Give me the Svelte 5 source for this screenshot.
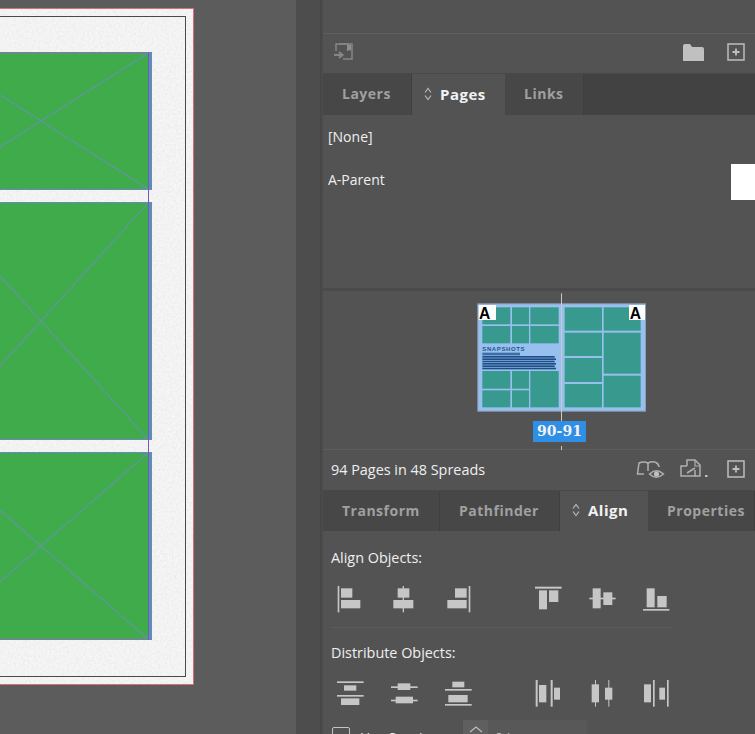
<script>
  const alignIcons = [
    { ox: 27, r: [[38,33,5,79],[48,40,34,28],[48,75,58,25]] },
    { ox: 189, r: [[233,33,4,79],[218,40,35,28],[205,75,60,25]] },
    { ox: 351, r: [[431,33,5,79],[390,40,35,28],[367,75,58,25]] },
    { ox: 627, gap: true, r: [[630,35,80,6],[642,46,24,57],[672,46,28,35]] },
    { ox: 789, r: [[793,68,79,5],[803,40,24,60],[835,52,27,38]] },
    { ox: 951, r: [[954,102,79,5],[965,40,24,57],[997,63,28,34]] }
  ];

  const distributeIcons = [
    { ox: 27, r: [[36,319,80,5],[57,331,37,16],[36,360,80,5],[48,370,55,20]] },
    { ox: 189, r: [[198,334,80,5],[218,325,38,20],[198,374,80,5],[212,365,52,20]] },
    { ox: 351, r: [[382,320,36,17],[360,342,80,5],[370,360,58,22],[360,387,80,5]] },
    { ox: 627, gap: true, r: [[632,315,6,80],[642,330,22,52],[677,315,6,80],[687,338,18,36]] },
    { ox: 789, r: [[810,315,3,80],[800,328,22,54],[850,315,3,80],[840,338,22,36]] },
    { ox: 951, r: [[957,328,21,54],[984,315,5,80],[1003,338,17,36],[1026,315,5,80]] }
  ];

  const frames = [138, 238, 188];

  // spread thumbnail cells, [x, y, w, h]
  const cells = [
    [37,52,84,51],[126,52,51,51],[181,52,85,51],
    [37,108,84,52],[126,108,51,52],[181,108,85,52],
    [37,243,84,53],[126,243,51,53],[181,243,85,109],
    [37,301,84,51],[126,301,51,51],
    [284,52,112,70],[284,128,112,70],[284,204,112,72],[284,282,112,70],
    [401,52,111,70],[401,128,111,123],[401,257,111,95]
  ];
  const bars = [198, 205, 212, 219, 226, 233];
</script>

{#snippet updown()}
  <svg class="updown" width="8" height="14" viewBox="0 0 8 14" aria-hidden="true">
    <path d="M1 5.500l3-4 3 4M1 8.500l3 4 3-4" />
  </svg>
{/snippet}

{#snippet plus()}
  <svg class="ic plus" width="18" height="18" viewBox="0 0 18 18" aria-hidden="true">
    <rect x="1" y="1" width="16" height="16" />
    <path d="M9 5.500v7M5.500 9h7" stroke-width="1.800" />
  </svg>
{/snippet}

<div class="app">
  <div class="canvas">
    <div class="page">
      <svg class="grain" aria-hidden="true">
        <filter id="paper">
          <feTurbulence type="fractalNoise" baseFrequency="0.45" numOctaves="3" />
          <feColorMatrix values="0 0 0 0 0.45  0 0 0 0 0.45  0 0 0 0 0.45  0 0 0 0.6 -0.2" />
        </filter>
        <rect width="100%" height="100%" filter="url(#paper)" />
      </svg>
      <div class="margins">
        <div class="frames">
          {#each frames as h}
            <div class="frame" style="height: {h}px">
              <svg viewBox="0 0 100 100" preserveAspectRatio="none" aria-hidden="true">
                <path d="M0 0L100 100M100 0L0 100" />
              </svg>
            </div>
          {/each}
        </div>
      </div>
    </div>
  </div>

  <div class="gutter"></div>

  <div class="panel">
    <div class="top-empty"></div>
    <div class="toolbar">
      <svg class="ic place" width="22" height="20" viewBox="0 0 22 20" aria-hidden="true">
        <path d="M3 9V2h16v15h-9" />
        <path d="M6 2h9v7" stroke-width="1.400" />
        <path d="M14 3h4v6l-2-1.500-2 1.500z" class="solid" />
        <path d="M1 13h8M6 10l3.500 3L6 16" stroke-width="2" />
      </svg>
      <span class="spacer"></span>
      <svg class="ic folder" width="21" height="17" viewBox="0 0 21 17" aria-hidden="true">
        <path class="solid" d="M0 2q0-2 2-2h5l2 3h10q2 0 2 2v12H0z" />
      </svg>
      {@render plus()}
    </div>

    <div class="tabs first">
      <div class="tab" style="width: 89px">Layers</div>
      <div class="tab active" style="width: 93px">{@render updown()}Pages</div>
      <div class="tab" style="width: 79px">Links</div>
    </div>

    <div class="parents">
      <div class="parent">[None]</div>
      <div class="parent">A-Parent<span class="swatch"></span></div>
    </div>

    <div class="thumbs">
      <svg class="spread" width="185" height="150" viewBox="0 3 555 450" aria-hidden="false">
        <rect x="23.500" y="41.500" width="503" height="322" fill="#97c0ee" stroke="#8b9db3" stroke-width="3" />
        {#each cells as c}
          <rect x={c[0]} y={c[1]} width={c[2]} height={c[3]} fill="#38998f" />
        {/each}
        <text x="37" y="184" class="snap">SNAPSHOTS</text>
        <rect x="37" y="188" width="113" height="8" fill="#3b6ea5" />
        {#each bars as y, i}
          <rect x="37" {y} width={i % 2 ? 221 : 217} height="5" fill="#1f4e86" />
        {/each}
        <rect x="26" y="45" width="52" height="45" fill="#fff" />
        <rect x="477" y="45" width="48" height="45" fill="#fff" />
        <text x="27" y="86" class="badge">A</text>
        <text x="479" y="86" class="badge">A</text>
        <rect x="273" y="10" width="3" height="383" fill="#c9c9c9" />
      </svg>
      <div class="spread-label">90-91</div>
      <div class="tick"></div>
    </div>

    <div class="footer">
      <span>94 Pages in 48 Spreads</span>
      <span class="spacer"></span>
      <svg class="ic eye" width="29" height="21" viewBox="0 0 29 21" aria-hidden="true">
        <path d="M8 15H1.500L3 4q4.500-2 9 0q4.500-2 8-.5q2.500 1 3 4.500" />
        <path d="M12 4v8" />
        <path d="M13.500 15q6.500-6.500 14 0q-7.500 6.500-14 0z" stroke-width="1.500" />
        <circle class="solid" cx="20.500" cy="15" r="2.600" />
      </svg>
      <svg class="ic dup" width="29" height="21" viewBox="0 0 29 21" aria-hidden="true">
        <path d="M7 7H1v10h14v-6" />
        <path d="M7 7V1h8l5 5v11h-5" />
        <path d="M15 1v6h5" stroke-width="1.200" />
        <path d="M7 14l8-5" />
        <rect class="solid" x="25" y="16" width="2.500" height="2" />
      </svg>
      {@render plus()}
    </div>

    <div class="tabs second">
      <div class="tab" style="width: 117px">Transform</div>
      <div class="tab" style="width: 120px">Pathfinder</div>
      <div class="tab active" style="width: 88px">{@render updown()}Align</div>
      <div class="tab" style="width: 107px">Properties</div>
    </div>

    <div class="align">
      <div class="label">Align Objects:</div>
      <div class="icon-row">
        {#each alignIcons as icon}
          <svg class:gap={icon.gap} width="30" height="30" viewBox="{icon.ox} 30 90 90" aria-hidden="true">
            {#each icon.r as r}
              <rect x={r[0]} y={r[1]} width={r[2]} height={r[3]} />
            {/each}
          </svg>
        {/each}
      </div>
      <div class="divider"></div>
      <div class="label dist">Distribute Objects:</div>
      <div class="icon-row">
        {#each distributeIcons as icon}
          <svg class:gap={icon.gap} width="30" height="30" viewBox="{icon.ox} 312 90 90" aria-hidden="true">
            {#each icon.r as r}
              <rect x={r[0]} y={r[1]} width={r[2]} height={r[3]} />
            {/each}
          </svg>
        {/each}
      </div>
      <div class="spacing">
        <span class="check"></span>
        <span class="use">Use Spacing</span>
        <span class="stepper"><span class="step"><svg width="16" height="7" viewBox="0 0 16 7" aria-hidden="true"><path d="M2 6l6-5 6 5" /></svg></span><span class="val">0 in</span></span>
      </div>
    </div>
  </div>
</div>

<style>
  :global(body) {
    margin: 0;
    background: #5c5c5c;
  }

  .app {
    display: flex;
    width: 755px;
    height: 734px;
    overflow: hidden;
    font-family: "Open Sans", "Noto Sans", sans-serif;
    color: #efefef;
  }

  /* document canvas */
  .canvas {
    position: relative;
    width: 296px;
    flex: none;
    background: #5c5c5c;
    overflow: hidden;
  }

  .page {
    position: absolute;
    left: -100px;
    top: 8px;
    width: 294px;
    height: 677px;
    box-sizing: border-box;
    padding: 7px;
    background: #f6f6f6;
    border: 1px solid #dc6b80;
  }

  .grain {
    position: absolute;
    inset: 0;
    width: 100%;
    height: 100%;
    opacity: 0.5;
  }

  .margins {
    position: relative;
    height: 661px;
    box-sizing: border-box;
    padding: 35px 33px 0 25px;
    border: 1px solid #4a4a4a;
  }

  .frames {
    position: relative;
    display: flex;
    flex-direction: column;
    gap: 12px;
  }

  .frames::after {
    content: "";
    position: absolute;
    top: 0;
    bottom: 0;
    right: 3px;
    width: 1px;
    background: #7a55c8;
  }

  .frame {
    box-sizing: border-box;
    background: #3fab4a;
    border-top: 1px solid #6b86c4;
    border-bottom: 1px solid #6b86c4;
    border-right: 4px solid #5b90b0;
  }

  .frame:first-child {
    border-top-color: #a45fd6;
  }

  .frame:last-child {
    border-bottom-color: #8d6fb8;
  }

  .frame svg {
    display: block;
    width: 100%;
    height: 100%;
  }

  .frame path {
    fill: none;
    stroke: #5a9a92;
    stroke-width: 1.500;
    vector-effect: non-scaling-stroke;
  }

  .gutter {
    width: 24px;
    flex: none;
    background: #4d4d4d;
    border-right: 1px solid #454545;
    box-sizing: content-box;
    margin-right: 2px;
    box-shadow: 3px 0 0 #4a4a4a;
  }

  /* right dock */
  .panel {
    flex: 1;
    display: flex;
    flex-direction: column;
    min-width: 0;
    background: #535353;
    font-size: 14px;
  }

  .top-empty {
    height: 33px;
    flex: none;
    border-bottom: 1px solid #5f5f5f;
  }

  .toolbar {
    height: 36px;
    flex: none;
    display: flex;
    align-items: center;
    padding: 0 10px;
    box-sizing: border-box;
  }

  .spacer {
    flex: 1;
  }

  .ic {
    display: block;
    flex: none;
    fill: none;
    stroke: #b0b0b0;
    stroke-width: 1.500;
  }

  .ic .solid {
    fill: #c0c0c0;
    stroke: none;
  }

  .place {
    opacity: 0.55;
  }

  .plus {
    margin-left: 23px;
    stroke: #bdbdbd;
  }

  .tabs {
    flex: none;
    display: flex;
    height: 41px;
    background: #424242;
    box-shadow: 0 -1px 0 #484848;
  }

  .tabs.first {
    margin-top: 4px;
  }

  .tabs.second {
    height: 40px;
    margin-top: 3px;
  }

  .tab {
    display: flex;
    align-items: center;
    flex: none;
    padding: 0 0 2px 19px;
    background: #474747;
    border-right: 1px solid #3f3f3f;
    box-sizing: border-box;
    color: #a0a0a0;
    font-weight: 700;
    font-size: 14px;
    letter-spacing: 0.500px;
    white-space: nowrap;
  }

  .tab.active {
    padding-left: 12px;
    background: #535353;
    color: #f2f2f2;
    border-right: none;
    font-size: 15px;
  }

  .updown {
    display: block;
    flex: none;
    margin-right: 8px;
    fill: none;
    stroke: #b8b8b8;
    stroke-width: 1.200;
  }

  .parents {
    height: 176px;
    flex: none;
    box-sizing: border-box;
    border-bottom: 3px solid #4a4a4a;
  }

  .parent {
    display: flex;
    align-items: center;
    justify-content: space-between;
    height: 43px;
    padding-left: 5px;
  }

  .swatch {
    width: 24px;
    height: 36px;
    background: #fff;
    margin-top: 5px;
  }

  .thumbs {
    position: relative;
    height: 159px;
    flex: none;
    box-sizing: border-box;
    padding: 0 0 0 147px;
    border-bottom: 1px solid #5c5c5c;
  }

  .spread {
    display: block;
  }

  .snap {
    font-family: "Liberation Sans", sans-serif;
    font-size: 18px;
    font-weight: 700;
    letter-spacing: 1.800px;
    fill: #24548c;
  }

  .badge {
    font-family: "Liberation Sans", sans-serif;
    font-size: 47px;
    font-weight: 700;
    fill: #000;
  }

  .spread-label {
    position: absolute;
    left: 210px;
    top: 130px;
    width: 53px;
    height: 21px;
    background: #2f8ee6;
    color: #f2f2f2;
    font-family: "DejaVu Serif", serif;
    font-size: 14px;
    font-weight: 700;
    line-height: 21px;
    text-align: center;
  }

  .tick {
    position: absolute;
    left: 238px;
    top: 155px;
    width: 1px;
    height: 4px;
    background: #c9c9c9;
  }

  .footer {
    height: 38px;
    flex: none;
    display: flex;
    align-items: center;
    padding: 0 10px 0 8px;
    box-sizing: border-box;
    font-size: 14.400px;
  }

  .footer .eye {
    margin-right: 15px;
  }

  .footer .plus {
    margin-left: 18px;
  }

  .align {
    flex: 1;
    padding: 0 0 0 8px;
    min-height: 0;
  }

  .label {
    height: 54px;
    line-height: 54px;
    font-size: 14.400px;
  }

  .icon-row {
    display: flex;
    gap: 24px;
    margin-left: 3px;
  }

  .icon-row svg {
    display: block;
    flex: none;
    fill: #c6c6c6;
  }

  .icon-row svg.gap {
    margin-left: 38px;
  }

  .divider {
    width: 340px;
    height: 1px;
    margin-top: 12px;
    background: #5d5d5d;
  }

  .label.dist {
    height: 51px;
    line-height: 50px;
  }

  .spacing {
    display: flex;
    align-items: flex-start;
    margin-top: 11px;
    height: 24px;
  }

  .check {
    width: 16px;
    height: 16px;
    margin: 7px 0 0 1px;
    border: 1px solid #c4c4c4;
    border-radius: 2px;
    flex: none;
  }

  .use {
    margin: 8px 0 0 10px;
    width: 103px;
    white-space: nowrap;
    flex: none;
  }

  .stepper {
    display: flex;
    width: 124px;
    height: 24px;
    background: #585858;
    flex: none;
  }

  .step {
    width: 25px;
    background: #5f5f5f;
    display: flex;
    justify-content: center;
    padding-top: 6px;
    box-sizing: border-box;
  }

  .step svg {
    fill: none;
    stroke: #bdbdbd;
    stroke-width: 1.200;
  }

  .val {
    margin: 8px 0 0 7px;
    color: #c8c8c8;
  }
</style>
